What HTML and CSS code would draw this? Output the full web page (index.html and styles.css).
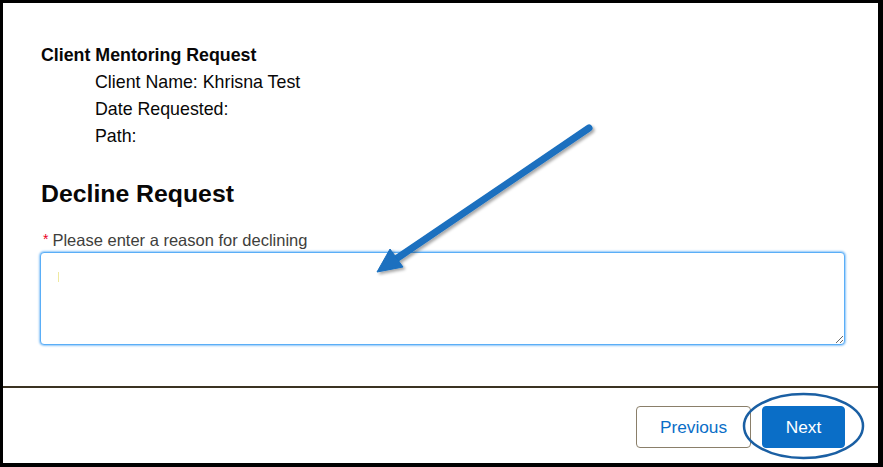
FILE: index.html
```html
<!DOCTYPE html>
<html>
<head>
<meta charset="utf-8">
<link rel="stylesheet" href="styles.css">
</head>
<body>
<div class="frame">
  <main class="content">
    <div class="summary">
      <div class="summary-title">Client Mentoring Request</div>
      <div class="summary-row">Client Name: Khrisna Test</div>
      <div class="summary-row">Date Requested:</div>
      <div class="summary-row">Path:</div>
    </div>
    <h2 class="section-title">Decline Request</h2>
    <label class="field-label" for="reason"><span class="req">*</span>Please enter a reason for declining</label>
    <div class="textarea-wrap">
      <textarea id="reason" class="field-input"></textarea>
      <span class="caret"></span>
    </div>
  </main>
  <footer class="footer">
    <button class="btn btn-neutral">Previous</button>
    <button class="btn btn-brand">Next</button>
  </footer>
  <svg class="annotation" width="883" height="467" viewBox="0 0 883 467">
    <defs>
      <filter id="sh" x="-20%" y="-20%" width="140%" height="140%">
        <feDropShadow dx="2" dy="2" stdDeviation="1.5" flood-color="#000" flood-opacity="0.35"/>
      </filter>
    </defs>
    <g filter="url(#sh)" fill="#1a6fbf" stroke="#1a6fbf">
      <line x1="589" y1="128" x2="393" y2="261" stroke-width="7" stroke-linecap="round"/>
      <polygon points="377,272 390,249 403,267" stroke-width="1" stroke-linejoin="round"/>
    </g>
    <ellipse cx="803.5" cy="426" rx="59.5" ry="32" fill="none" stroke="#1a5fa3" stroke-width="2.5"/>
  </svg>
</div>
</body>
</html>
```
FILE: styles.css
```css
* { box-sizing: border-box; }
html, body { margin: 0; padding: 0; }
body {
  width: 883px;
  height: 467px;
  font-family: "Liberation Sans", Arial, sans-serif;
  color: #080707;
  background: #fff;
  overflow: hidden;
}
.frame {
  position: relative;
  width: 883px;
  height: 467px;
  border-style: solid;
  border-color: #000;
  border-width: 3px 5px 4px 3px;
  display: flex;
  flex-direction: column;
}
.content {
  flex: 1;
  padding: 39px 33px 0 38px;
  border-bottom: 2px solid #3b3222;
  display: flex;
  flex-direction: column;
}
.summary {
  font-size: 17.8px;
  line-height: 27px;
}
.summary-title {
  font-weight: bold;
}
.summary-row {
  padding-left: 54px;
}
.section-title {
  margin: 29px 0 0 0;
  font-size: 24.8px;
  line-height: 30px;
  font-weight: bold;
}
.field-label {
  margin-top: 21px;
  font-size: 16.5px;
  line-height: 20px;
  color: #3e3e3c;
  display: flex;
  align-items: flex-start;
}
.req {
  color: #ea001e;
  font-size: 14px;
  margin: 0 4px 0 2px;
  line-height: 18px;
}
.textarea-wrap {
  position: relative;
  margin-top: 2px;
  margin-left: -1px;
}
.field-input {
  display: block;
  width: 805px;
  height: 93px;
  border: 1px solid #5aaef7;
  border-radius: 4px;
  box-shadow: 0 0 2px 1px #8fc6f8;
  outline: none;
  resize: vertical;
  background: #fff;
  font-family: inherit;
  font-size: 14px;
}
.caret {
  position: absolute;
  left: 18px;
  top: 20px;
  width: 1px;
  height: 10px;
  background: #efe9a0;
}
.footer {
  height: 75px;
  display: flex;
  justify-content: flex-end;
  align-items: flex-start;
  gap: 11px;
  padding: 18px 33px 0 0;
}
.btn {
  height: 42px;
  border-radius: 4px;
  font-family: "Liberation Sans", Arial, sans-serif;
  font-size: 17.3px;
  padding: 0;
  cursor: pointer;
}
.btn-neutral {
  width: 115px;
  background: #fff;
  color: #0a6ec7;
  border: 1px solid #8a7f6a;
}
.btn-brand {
  width: 83px;
  background: #0a6ec7;
  color: #fff;
  border: 1px solid #0a6ec7;
}
.annotation {
  position: absolute;
  left: -3px;
  top: -3px;
  pointer-events: none;
}
```
